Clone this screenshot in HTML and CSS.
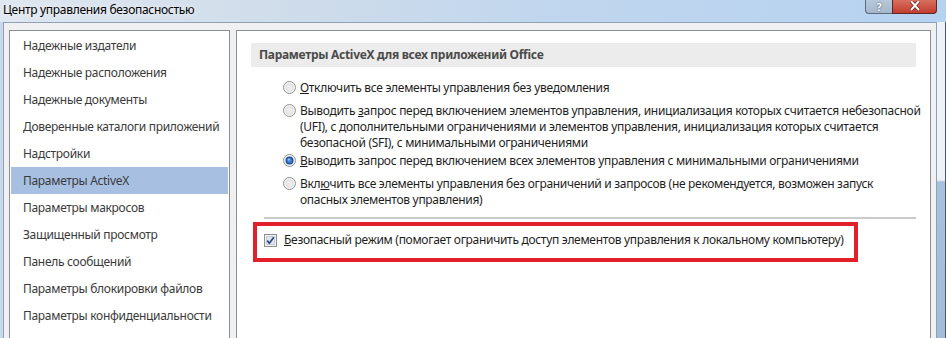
FILE: index.html
```html
<!DOCTYPE html>
<html lang="ru">
  <head>
    <meta charset="UTF-8" />
    <meta name="viewport" content="width=device-width, initial-scale=1.0" />
    <title>Центр управления безопасностью</title>
    <link rel="stylesheet" href="styles.css">
  </head>
  <body>
    <div class="window">
      <div class="titlebar">
        <span class="title">Центр управления безопасностью</span>
        <div class="caption-buttons">
          <span class="btn-help">?</span>
          <span class="btn-close">
            <svg width="14" height="10" viewBox="0 0 14 10">
              <path d="M3 0 L11 9 M11 0 L3 9" stroke="#6b1d16" stroke-width="3.4" />
              <path d="M3 0 L11 9 M11 0 L3 9" stroke="#fff" stroke-width="2" />
            </svg>
          </span>
        </div>
      </div>

      <div class="frame">
        <div class="frame-left"></div>

        <div class="dialog">
          <ul class="nav">
            <li>Надежные издатели</li>
            <li>Надежные расположения</li>
            <li>Надежные документы</li>
            <li>Доверенные каталоги приложений</li>
            <li>Надстройки</li>
            <li class="selected">Параметры ActiveX</li>
            <li>Параметры макросов</li>
            <li>Защищенный просмотр</li>
            <li>Панель сообщений</li>
            <li>Параметры блокировки файлов</li>
            <li>Параметры конфиденциальности</li>
          </ul>

          <div class="content">
            <div class="section-title">Параметры ActiveX для всех приложений Office</div>

            <div class="options">
              <label class="option">
                <svg class="radio" width="13" height="13" viewBox="0 0 13 13">
                  <circle cx="6.5" cy="6.5" r="6" fill="#f4f4f4" stroke="#939393" />
                  <circle cx="6.5" cy="6.5" r="4" fill="#dedede" />
                  <circle cx="6.5" cy="6.5" r="3" fill="#ececec" />
                </svg>
                <span><u>О</u>тключить все элементы управления без уведомления</span>
              </label>

              <label class="option option-tight">
                <svg class="radio" width="13" height="13" viewBox="0 0 13 13">
                  <circle cx="6.5" cy="6.5" r="6" fill="#f4f4f4" stroke="#939393" />
                  <circle cx="6.5" cy="6.5" r="4" fill="#dedede" />
                  <circle cx="6.5" cy="6.5" r="3" fill="#ececec" />
                </svg>
                <span>Выводить <u>з</u>апрос перед включением элементов управления, инициализация которых считается небезопасной<br>(UFI), с дополнительными ограничениями и элементов управления, инициализация которых считается<br>безопасной (SFI), с минимальными ограничениями</span>
              </label>

              <label class="option">
                <svg class="radio" width="13" height="13" viewBox="0 0 13 13">
                  <circle cx="6.5" cy="6.5" r="6" fill="#f4f4f4" stroke="#939393" />
                  <circle cx="6.5" cy="6.5" r="4" fill="#1d4f9c" />
                  <circle cx="6.5" cy="6.5" r="2.6" fill="#3f7fd0" />
                  <circle cx="5.8" cy="5.6" r="1.2" fill="#9cc4f0" />
                </svg>
                <span><u>В</u>ыводить запрос перед включением всех элементов управления с минимальными ограничениями</span>
              </label>

              <label class="option">
                <svg class="radio" width="13" height="13" viewBox="0 0 13 13">
                  <circle cx="6.5" cy="6.5" r="6" fill="#f4f4f4" stroke="#939393" />
                  <circle cx="6.5" cy="6.5" r="4" fill="#dedede" />
                  <circle cx="6.5" cy="6.5" r="3" fill="#ececec" />
                </svg>
                <span>Вкл<u>ю</u>чить все элементы управления без ограничений и запросов (не рекомендуется, возможен запуск<br>опасных элементов управления)</span>
              </label>
            </div>

            <div class="separator"></div>

            <div class="safe-mode">
              <label class="check">
                <svg class="checkbox" width="13" height="13" viewBox="0 0 13 13">
                  <rect x="0.5" y="0.5" width="12" height="12" fill="#f2f2f2" stroke="#8f8f8f" />
                  <rect x="2.5" y="2.5" width="8" height="8" fill="#e2e6ec" stroke="#c9ced6" />
                  <path d="M3.2 6.6 L5.4 9.2 L9.8 3.2" fill="none" stroke="#22478f" stroke-width="1.7" />
                </svg>
                <span><u>Б</u>езопасный режим (помогает ограничить доступ элементов управления к локальному компьютеру)</span>
              </label>
            </div>
          </div>
        </div>

        <div class="frame-right"></div>
      </div>
    </div>
  </body>
</html>
```

FILE: styles.css
```css
body {
  margin: 0;
  font-family: "Noto Sans", "Open Sans", sans-serif;
  font-size: 12px;
  letter-spacing: -0.3px;
  overflow: hidden;
}

.window {
  width: 946px;
  height: 338px;
  display: flex;
  flex-direction: column;
  background: #c8d9ec;
  overflow: hidden;
}

.titlebar {
  height: 22px;
  flex: none;
  display: flex;
  justify-content: space-between;
  align-items: flex-start;
  background: linear-gradient(90deg, #dfe7f0 0%, #cfdcea 30%, #c0d6ee 60%, #b6d2f1 100%);
}

.title {
  padding: 2px 0 0 3px;
  line-height: 16px;
  color: #000;
  text-shadow: 0 0 6px #fff;
}

.caption-buttons {
  display: flex;
  margin-right: 9px;
}

.btn-help {
  width: 27px;
  height: 14px;
  padding-top: 1px;
  box-sizing: border-box;
  line-height: 12px;
  text-align: center;
  font-size: 10px;
  font-weight: bold;
  color: #fff;
  text-shadow: 0 0 2px #2c3c50;
  background: linear-gradient(#b8c8da, #a6b7cc);
  border: 1px solid #5c6b7e;
  border-top: none;
  border-right: none;
  border-radius: 0 0 0 4px;
}

.btn-close {
  width: 45px;
  height: 14px;
  box-sizing: border-box;
  padding-top: 1px;
  display: flex;
  justify-content: center;
  align-items: flex-start;
  background: linear-gradient(#d8705f, #c33d2e);
  border: 1px solid #5c2a24;
  border-top: none;
  border-radius: 0 0 4px 0;
}

.frame {
  flex: 1;
  display: flex;
}

.frame-left {
  width: 3px;
  background: #c9d8e9;
}

.frame-right {
  width: 8px;
  border-right: 1px solid #4a5868;
  background: linear-gradient(#eef1f6 0, #eef1f6 158px, #a7c0de 160px, #a2bcdc 100%);
}

.dialog {
  width: 934px;
  box-sizing: border-box;
  display: flex;
  gap: 6px;
  padding: 7px 5px 0 5px;
  background: #f0f0f0;
  border: 1px solid #8fa1b6;
  border-bottom: none;
}

.nav {
  width: 221px;
  flex: none;
  box-sizing: border-box;
  margin: 0;
  padding: 1px;
  list-style: none;
  background: #fff;
  border: 1px solid #8a8e96;
  border-bottom: none;
}

.nav li {
  height: 27px;
  line-height: 27px;
  padding-left: 12px;
  color: #3a3a3a;
  white-space: nowrap;
}

.nav .selected {
  background: #a7c0e2;
}

.content {
  flex: 1;
  min-width: 0;
  background: #fff;
  border: 1px solid #8a8e96;
  border-bottom: none;
  color: #1e1e1e;
}

.section-title {
  margin: 12px 14px 0 14px;
  height: 24px;
  line-height: 24px;
  padding-left: 8px;
  background: #ececec;
  color: #4a4a4a;
  font-weight: bold;
}

.options {
  margin: 13px 0 0 46px;
}

.option {
  display: flex;
  align-items: flex-start;
  gap: 4px;
  line-height: 16px;
  margin-bottom: 7px;
  white-space: nowrap;
}

.option-tight {
  margin-bottom: 2px;
}

.radio {
  flex: none;
  margin-top: 1px;
}

.separator {
  height: 2px;
  margin: 9px 14px 0 27px;
  background: #cbcbcb;
}

.safe-mode {
  width: 605px;
  height: 40px;
  box-sizing: border-box;
  margin: 3px 0 0 16px;
  padding: 6px 0 0 7px;
  border: 4px solid #e3202a;
}

.check {
  display: flex;
  align-items: center;
  gap: 7px;
  line-height: 16px;
  white-space: nowrap;
}

.checkbox {
  flex: none;
}
```
